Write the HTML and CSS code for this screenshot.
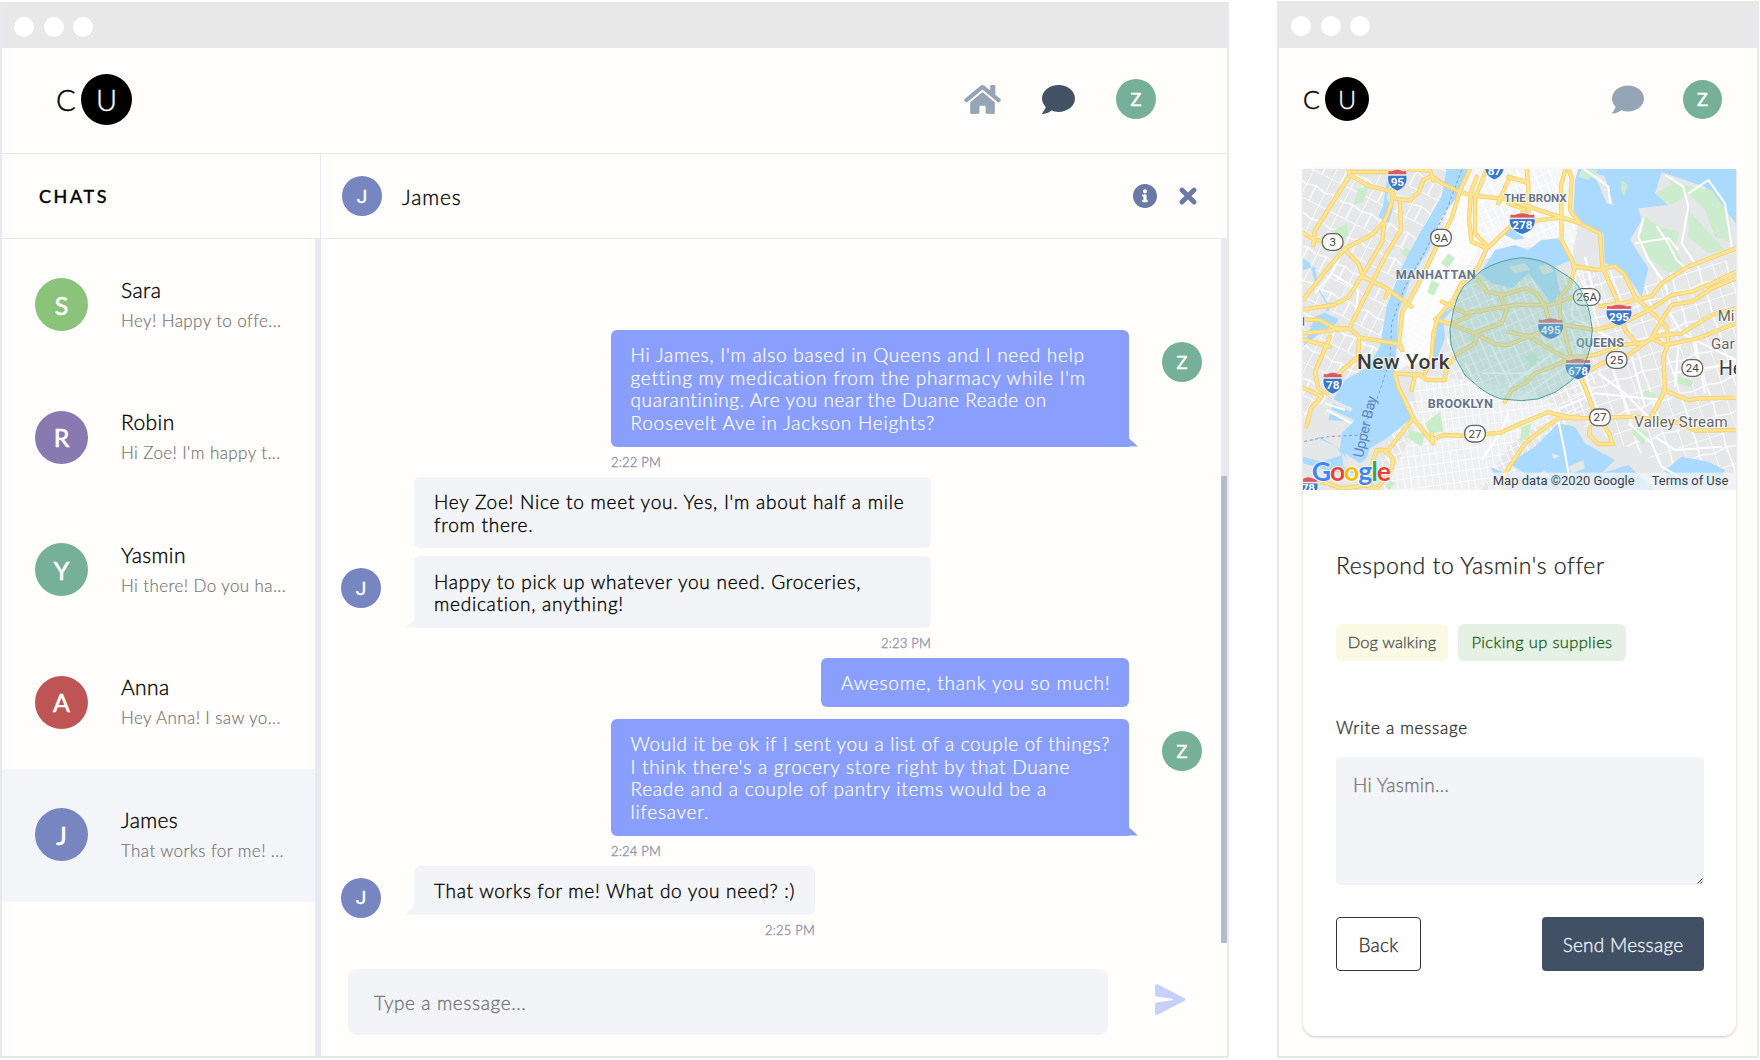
FILE: index.html
```html
<!DOCTYPE html>
<html lang="en">
<head>
<meta charset="utf-8">
<title>CU</title>
<link rel="stylesheet" href="styles.css">
</head>
<body>
<svg class="sprite" aria-hidden="true">
  <symbol id="i-home" viewBox="0 32 576 448"><path d="M280.37 148.26L96 300.11V464a16 16 0 0 0 16 16l112.06-.29a16 16 0 0 0 15.92-16V368a16 16 0 0 1 16-16h64a16 16 0 0 1 16 16v95.64a16 16 0 0 0 16 16.05L464 480a16 16 0 0 0 16-16V300L295.67 148.26a12.19 12.19 0 0 0-15.3 0zM571.6 251.47L488 182.56V44.05a12 12 0 0 0-12-12h-56a12 12 0 0 0-12 12v72.61L318.47 43a48 48 0 0 0-61 0L4.34 251.47a12 12 0 0 0-1.6 16.9l25.5 31A12 12 0 0 0 45.15 301l235.22-193.74a12.19 12.19 0 0 1 15.3 0L530.9 301a12 12 0 0 0 16.9-1.6l25.5-31a12 12 0 0 0-1.7-16.93z"/></symbol>
  <symbol id="i-comment" viewBox="0 32 512 448"><path d="M256 32C114.6 32 0 125.1 0 240c0 49.6 21.4 95 57 130.7C44.5 421.1 2.7 466 2.2 466.5c-2.2 2.3-2.8 5.7-1.5 8.7S4.8 480 8 480c66.3 0 116-31.8 140.6-51.4 32.7 12.3 69 19.4 107.4 19.4 141.4 0 256-93.1 256-208S397.4 32 256 32z"/></symbol>
  <symbol id="i-info" viewBox="8 8 496 496"><path d="M256 8C119.043 8 8 119.083 8 256c0 136.997 111.043 248 248 248s248-111.003 248-248C504 119.083 392.957 8 256 8zm0 110c23.196 0 42 18.804 42 42s-18.804 42-42 42-42-18.804-42-42 18.804-42 42-42zm56 254c0 6.627-5.373 12-12 12h-88c-6.627 0-12-5.373-12-12v-24c0-6.627 5.373-12 12-12h12v-64h-12c-6.627 0-12-5.373-12-12v-24c0-6.627 5.373-12 12-12h64c6.627 0 12 5.373 12 12v100h12c6.627 0 12 5.373 12 12v24z"/></symbol>
  <symbol id="i-close" viewBox="0 0 18 18"><path d="M3 3l12 12M15 3L3 15" fill="none" stroke="currentColor" stroke-width="4.8" stroke-linecap="round"/></symbol>
  <symbol id="i-send" viewBox="0 0 31 31"><path d="M3 .5L29.5 14.3a1.3 1.3 0 0 1 0 2.4L3 30.5C1.500 31.200 0 30.500 0 29V20.500a2 2 0 0 1 1.600-2L17 16.300a.8.8 0 0 0 0-1.600L1.600 12.500a2 2 0 0 1-1.600-2V2C0 .500 1.500-.200 3 .500z"/></symbol>
</svg>

<div class="stage">
  <section class="window window-wide">
    <div class="titlebar"><i></i><i></i><i></i></div>
    <header class="topbar">
      <div class="logo"><span>C</span><b>U</b></div>
      <nav>
        <svg class="home"><use href="#i-home"/></svg>
        <svg class="comment"><use href="#i-comment"/></svg>
        <span class="avatar green">Z</span>
      </nav>
    </header>
    <div class="chat-app">
      <aside>
        <h2>CHATS</h2>
        <div class="people">
          <div class="person"><span class="avatar lime">S</span><div><h3>Sara</h3><p>Hey! Happy to offe...</p></div></div>
          <div class="person"><span class="avatar purple">R</span><div><h3>Robin</h3><p>Hi Zoe! I'm happy t...</p></div></div>
          <div class="person"><span class="avatar green">Y</span><div><h3>Yasmin</h3><p>Hi there! Do you ha...</p></div></div>
          <div class="person"><span class="avatar red">A</span><div><h3>Anna</h3><p>Hey Anna! I saw yo...</p></div></div>
          <div class="person selected"><span class="avatar blue">J</span><div><h3>James</h3><p>That works for me! ...</p></div></div>
        </div>
      </aside>
      <main>
        <div class="chat-head">
          <span class="avatar blue">J</span><h3>James</h3>
          <svg class="info"><use href="#i-info"/></svg>
          <svg class="close"><use href="#i-close"/></svg>
        </div>
        <div class="messages">
          <div class="thread">
            <div class="row me"><div class="bubble wide tail">Hi James, I'm also based in Queens and I need help<br>getting my medication from the pharmacy while I'm<br><span class="snug">quarantining. Are you near the Duane Reade on</span><br>Roosevelt Ave in Jackson Heights?</div><span class="avatar green">Z</span></div>
            <time class="time-me">2:22 PM</time>
            <div class="row them first"><div class="bubble wide">Hey Zoe! Nice to meet you. Yes, I'm about half a mile<br>from there.</div></div>
            <div class="row them"><span class="avatar blue">J</span><div class="bubble wide tail">Happy to pick up whatever you need. Groceries,<br>medication, anything!</div></div>
            <time class="time-them">2:23 PM</time>
            <div class="row me first"><div class="bubble">Awesome, thank you so much!</div></div>
            <div class="row me"><div class="bubble wide tail"><span class="snug">Would it be ok if I sent you a list of a couple of things?</span><br>I think there's a grocery store right by that Duane<br>Reade and a couple of pantry items would be a<br>lifesaver.</div><span class="avatar green">Z</span></div>
            <time class="time-me">2:24 PM</time>
            <div class="row them"><span class="avatar blue">J</span><div class="bubble mid tail">That works for me! What do you need? :)</div></div>
            <time class="time-mid">2:25 PM</time>
          </div>
          <div class="track"><div class="thumb"></div></div>
        </div>
        <div class="composer">
          <div class="field">Type a message...</div>
          <svg class="send"><use href="#i-send"/></svg>
        </div>
      </main>
    </div>
  </section>

  <section class="window window-phone">
    <div class="titlebar"><i></i><i></i><i></i></div>
    <header class="topbar">
      <div class="logo"><span>C</span><b>U</b></div>
      <nav>
        <svg class="comment"><use href="#i-comment"/></svg>
        <span class="avatar green">Z</span>
      </nav>
    </header>
    <article class="card">
      <svg class="map" viewBox="24 27 1299 963" preserveAspectRatio="none">
        <defs>
          <pattern id="grid-a" width="26" height="17" patternUnits="userSpaceOnUse" patternTransform="rotate(28)"><path d="M0 0H26M0 0V17" class="street"/></pattern>
          <pattern id="grid-b" width="21" height="32" patternUnits="userSpaceOnUse" patternTransform="rotate(-8)"><path d="M0 0H21M0 0V32" class="street"/></pattern>
          <pattern id="grid-c" width="44" height="31" patternUnits="userSpaceOnUse" patternTransform="rotate(-24)"><path d="M0 0H44M0 0V31M22 0V31" class="street"/></pattern>
          <pattern id="grid-d" width="62" height="88" patternUnits="userSpaceOnUse" patternTransform="rotate(27)"><path d="M0 0H62M0 0V88M0 48L30 40L62 48M30 40V88" class="street"/></pattern>
          <pattern id="grid-e" width="84" height="98" patternUnits="userSpaceOnUse" patternTransform="rotate(-18)"><path d="M0 0H84M0 0V98M0 50L40 42L84 50M44 0L40 42L44 98" class="street"/></pattern>
          <g id="roads">
            <path d="M160 27L165 45L105 140L60 212L55 255M24 218L60 240L95 244M165 45L215 75L290 95L300 115L345 122L372 95L385 60L410 48L440 70L500 98L545 108L640 118L700 140L800 172"/>
            <path d="M165 36H300M330 27L405 32L415 62M296 80L290 130L268 185L230 225L150 265L90 335L24 420M315 125L318 210L270 290L205 420L165 500"/>
            <path d="M268 185L262 245L215 325L160 412L115 435L24 448M148 268L190 310L205 352L270 382L350 440M272 412L280 392M24 478L75 480L115 503L165 506L195 533L310 552L320 570M24 520L160 506M24 538L105 560M192 535L190 590L125 645M105 530L60 635L70 685L95 700M24 682L80 710L48 745L35 798"/>
            <path d="M525 27L495 92L470 175L420 270L392 330L345 420L322 455L312 545L322 570M545 50L528 95L522 180L530 245L575 265L550 320L500 370L475 420L430 470L415 520L410 590L390 640"/>
            <path d="M575 27L540 115L540 220L580 262L650 195L690 150L640 130M420 478L460 490L535 520L620 490L635 450L615 405L640 400L690 385L725 400L750 440L762 480M440 425L510 460L660 435L765 435L830 412M508 350L545 355L575 395L625 405M470 490L520 470M540 520L600 552L640 555L720 522L762 510M545 525L540 550L490 580L455 620L450 660L395 660L375 645L300 640M640 515L705 530L760 565L810 592L850 590M630 725L650 690L690 670L720 640L770 620L830 595L900 585L980 555L1050 548"/>
            <path d="M640 50L700 70V158M695 27L700 80M820 27L830 55L825 150L855 190L915 220L922 320L970 430L990 510L1020 545M812 27L798 75L800 240L840 320L825 375L795 410L795 465L825 580M640 60L610 130M650 55L700 65M700 185L800 172L855 190M835 318L905 330L960 318L990 345L1020 410L1115 500L1120 550L1105 590L1110 690L1080 750L1070 765"/>
            <path d="M915 438L980 430L1070 408L1100 370L1170 325L1230 300L1323 265M810 495L900 510L980 490L1060 452L1130 405L1190 395L1250 370L1323 335M870 640L920 610L1000 585L1070 535L1100 480L1130 435L1190 425L1250 385L1323 355M1070 530L1160 520L1250 465L1323 445M1070 535L1110 555L1210 535L1323 490M1105 690L1180 720L1215 715L1323 713M850 590L830 600L870 680L898 760"/>
            <path d="M300 640L310 680L355 775L280 870L245 870L230 915L220 990M355 775L415 850L410 820M350 690L360 645M415 838L445 825L520 828L615 818L690 785L760 757L840 775L1020 770M850 770L790 775L740 810L690 850L650 910L630 940L625 990M1020 770L1160 790L1200 812L1323 810M885 800L882 825L910 852L955 852M925 795L945 825L950 850M265 870L295 895L290 925L260 970L240 990M24 980L80 965L140 985L230 975"/>
          </g>
          <path id="shield2" d="M-28-16H28C33 8 18 25 0 31C-18 25-33 8-28-16z"/>
          <path id="shield2-top" d="M-27-31q9 4 16-1 11-5 22 0 7 5 16 1l2 13h-58z"/>
          <path id="shield3" d="M-38-15H38C43 8 24 26 0 32C-24 26-43 8-38-15z"/>
          <path id="shield3-top" d="M-36-29q12 4 20-1 16-5 32 0 8 5 20 1l2 12h-76z"/>
        </defs>
        <rect x="24" y="27" width="1299" height="963" fill="#e6e7e8"/>
        <path d="M24 27H480L440 170L300 470L265 620L110 700L24 790Z" fill="url(#grid-d)"/>
        <path d="M470 27H880L830 300L700 260L560 300L470 420L420 560L300 640L330 440L440 240Z" fill="#f4f5f6"/>
        <path d="M500 90L560 250L440 450L410 590L340 620L325 450L400 320Z" fill="#fcfcfc"/>
        <path d="M500 50L560 250L440 450L410 590L300 620L320 450L400 320Z" fill="url(#grid-a)"/>
        <path d="M520 27H840V250L660 230L560 300Z" fill="url(#grid-c)"/>
        <path d="M480 380L700 340L900 330L900 700L620 990H260V880L360 700L440 640Z" fill="url(#grid-c)"/>
        <path d="M830 330L1060 330L1323 300V940H1160L830 780Z" fill="url(#grid-e)"/>
        <path d="M350 640L650 680L800 740L640 860L560 990H270L370 780Z" fill="#eff0f1"/>
        <path d="M350 640L650 680L800 740L640 860L560 990H270L370 780Z" fill="url(#grid-b)"/>
        <g fill="#c9ecc9">
          <path d="M190 85l30-5-15 45-30 10zM110 215l45-25 5 35-35 35zM330 262l18 10-10 20-20-10zM460 280l20 15-22 30-20-15zM410 360l25 12-20 35-18-10zM340 810l50 12-10 38-40-25zM435 755l10 60-40 5-15-30zM285 960l15 10-15 20-12-10zM690 590l25-15 15 25-20 20zM1050 690l35 12-8 12-32-10zM1150 650l45 12-8 20-40-12zM520 530l20-8 8 30-15 8zM1010 800l50 20-15 35-30-30zM680 800l30-10-10 45-25 10z"/>
        </g>
        <g fill="#aadaff">
          <path d="M850 27H1323V190L1230 80L1100 37L1080 100L1120 135L1030 145L1040 180L1005 240L1060 325L1040 410L985 330L930 310L925 220L860 190L835 150L840 60Z"/>
          <path d="M480 27H530L495 100L440 170L400 270L350 350L310 455L305 555L295 650L335 730L350 775L275 835L225 865L205 920H170L135 870L140 820L175 785L100 780L120 710L150 660L220 620L255 560L275 440L320 320L380 210L440 110L455 27Z"/>
          <path d="M575 310L600 270L660 255L700 270L740 240L790 235L830 300L780 320L795 400L770 435L740 390L700 340L650 385L590 370L555 340ZM480 440L445 480L450 535L425 600L408 590L425 510L420 470Z"/>
          <path d="M690 235L660 240L630 225L640 200ZM24 330L60 320L70 390L105 450L60 470L24 560L60 530L125 490L130 475L90 460L100 430L60 370L45 310L24 295ZM24 850L75 830L140 870L145 920L190 940L110 935L24 910Z"/>
          <path d="M840 800L870 850L960 900L920 940H690L640 910L720 860L790 790ZM625 990L585 920L630 940L700 940H920L1000 915L1080 990ZM1110 930L1160 890L1240 905L1290 930L1270 980L1120 985Z"/>
          <path d="M275 65l12-10-12 60 20 30-15 45-30-20 15-35z"/>
        </g>
        <g fill="#e6e7e8">
          <path d="M640 320L690 310L705 330L660 340ZM730 320L760 310L775 335L745 345ZM870 27L930 50L955 135L935 130L905 60L860 35ZM24 850L70 835L125 860L140 885L80 905L24 890ZM150 880L195 910L240 880L210 960L160 920ZM770 880l25 8-20 10zM700 950l50-18 20 20zM820 920l45-20 5 25-40 15z"/>
        </g>
        <path d="M75 740l100 45M95 715l75 35" fill="none" stroke="#e6e7e8" stroke-width="12"/>
        <g fill="#cdeccd">
          <path d="M1105 37L1160 75L1250 90L1300 160L1310 250L1260 230L1230 150L1180 100L1130 135L1080 100L1130 75ZM1050 170L1090 200L1150 215L1140 270L1170 320L1120 340L1070 300L1030 240L1040 215ZM1180 150L1215 190L1290 270L1240 280L1180 230ZM860 27L910 30L880 60L850 50ZM980 60l18 15-10 35-10-20z"/>
        </g>
        <g class="lanes">
          <path d="M1110 45L1165 80L1180 140L1160 250L1200 310M1180 100L1240 60L1290 130L1310 260M1045 175L1030 230L1060 300L1110 370L1130 450M1085 200L1120 250L1145 300L1180 330M1020 250L1120 235L1150 270M865 27L900 50L940 80L945 130M790 780L810 880L830 990M1000 790L1070 850L1100 920L1170 960M1080 830L1140 870L1280 860M910 640L990 700L1080 790M950 620L1010 780M1010 590L1050 740M1150 560L1140 680M1200 540L1230 700M1130 640L1323 610M1120 450L1160 520L1323 600M60 400L110 340L190 390L180 480M110 340L140 280M95 750L170 790M90 730L150 750M560 900L620 810L640 760M740 770L900 700L1100 720M840 330L830 470L960 540M870 290L900 410L930 440M640 680L800 560M670 720L830 610M560 640L760 640M510 610L570 720M590 560L650 680"/>
        </g>
        <path d="M500 30L455 150L395 265L330 380L290 490L285 600L245 720L195 825L100 830L24 845" fill="none" stroke="#87a0bd" stroke-width="3" stroke-dasharray="9 8"/>
        <use href="#roads" class="casing"/>
        <use href="#roads" class="highway"/>
        <g class="names">
          <text x="721" y="127" textLength="188" class="area bronx">THE BRONX</text>
          <text x="422" y="357" textLength="240" class="area">MANHATTAN</text>
          <text x="496" y="745" textLength="195" class="area">BROOKLYN</text>
          <text x="915" y="560" textLength="144" class="area">QUEENS</text>
          <text x="325" y="626" textLength="278" class="city">New York</text>
          <text x="1158" y="800" textLength="280" class="town">Valley Stream</text>
          <text x="1268" y="484" class="town left">Mi</text>
          <text x="1248" y="568" class="town left">Gar</text>
          <text x="1272" y="646" class="city left thin">He</text>
          <text x="0" y="0" transform="translate(203 895) rotate(-77)" class="bay" textLength="188">Upper Bay</text>
        </g>
        <g class="shield">
          <g transform="translate(307 62)"><use href="#shield2-top" class="r"/><use href="#shield2" class="b"/><text y="17">95</text></g>
          <g transform="translate(113 671)"><use href="#shield2-top" class="r"/><use href="#shield2" class="b"/><text y="17">78</text></g>
          <g transform="translate(598 28)"><use href="#shield2" class="b"/><text y="18">87</text></g>
          <g transform="translate(40 985)"><use href="#shield2-top" class="r"/><use href="#shield2" class="b"/><text y="12">78</text></g>
          <g transform="translate(24 484)"><path class="b" d="M-5-14H5V14H-5z"/></g>
          <g transform="translate(682 191)"><use href="#shield3-top" class="r"/><use href="#shield3" class="b"/><text y="17">278</text></g>
          <g transform="translate(972 465)"><use href="#shield3-top" class="r"/><use href="#shield3" class="b"/><text y="17">295</text></g>
          <g transform="translate(767 506)"><use href="#shield3-top" class="r"/><use href="#shield3" class="b"/><text y="17">495</text></g>
          <g transform="translate(849 627)"><use href="#shield3-top" class="r"/><use href="#shield3" class="b"/><text y="17">678</text></g>
        </g>
        <g class="route">
          <rect x="82" y="221" width="62" height="50" rx="23"/><text x="113" y="259">3</text>
          <rect x="407" y="208" width="62" height="50" rx="23"/><text x="438" y="246">9A</text>
          <rect x="835" y="386" width="80" height="50" rx="25"/><text x="875" y="424">25A</text>
          <rect x="934" y="575" width="62" height="50" rx="23"/><text x="965" y="612">25</text>
          <rect x="1161" y="599" width="62" height="50" rx="23"/><text x="1192" y="637">24</text>
          <rect x="884" y="747" width="62" height="50" rx="23"/><text x="915" y="784">27</text>
          <rect x="509" y="796" width="62" height="50" rx="23"/><text x="540" y="833">27</text>
        </g>
        <path d="M679 293Q735 297 765 315L820 350Q845 366 860 395Q880 430 886 470L892 510L886 560Q880 590 865 620Q850 645 825 665L780 697L728 717L680 722L620 717Q585 708 550 680L510 645Q480 600 468 555L465 508L475 450Q485 410 505 380L560 332Q610 300 679 293Z" fill="#8cc9c2" fill-opacity=".42" stroke="#4fa09a" stroke-width="3"/>
        <rect x="580" y="938" width="743" height="55" fill="#f5f7fa" fill-opacity=".72"/>
        <text x="593" y="976" class="legal" textLength="426">Map data ©2020 Google</text>
        <text x="1070" y="976" class="legal" textLength="230">Terms of Use</text>
        <text x="50" y="963" class="google" textLength="238"><tspan fill="#4285f4">G</tspan><tspan fill="#ea4335">o</tspan><tspan fill="#fbbc05">o</tspan><tspan fill="#4285f4">g</tspan><tspan fill="#34a853">l</tspan><tspan fill="#ea4335">e</tspan></text>
      </svg>
      <div class="card-body">
        <h1>Respond to Yasmin's offer</h1>
        <div class="chips"><span class="chip yellow">Dog walking</span><span class="chip mint">Picking up supplies</span></div>
        <label>Write a message</label>
        <div class="textarea">Hi Yasmin...<svg class="grip" viewBox="0 0 6 6"><path d="M.5 5.500l5-5M3.500 5.500l2-2" fill="none" stroke="#333"/></svg></div>
        <div class="actions"><button class="back">Back</button><button class="submit">Send Message</button></div>
      </div>
    </article>
  </section>
</div>
</body>
</html>
```
FILE: styles.css
```css
* { box-sizing: border-box; margin: 0; padding: 0; }
body { width: 1760px; height: 1060px; overflow: hidden; background: #fff; color: #000; font-family: Lato, "Open Sans", sans-serif; font-weight: 300; -webkit-text-stroke: .35px; }
h1, h2, h3 { font-weight: 300; }
svg { display: block; fill: currentColor; flex: none; -webkit-text-stroke: 0; }
.sprite { display: none; }
.stage { display: flex; justify-content: space-between; padding: 2px 1px 2px 0; height: 1060px; }

.window { background: #fffefd; border: 2px solid #e8e9ec; border-top: 0; display: flex; flex-direction: column; }
.window-wide { width: 1229px; height: 1056px; }
.window-phone { width: 482px; height: 1057px; margin-top: -1px; }
.titlebar { height: 46px; flex: none; background: #e8e8e8; display: flex; gap: 9.500px; padding: 15px 0 0 12px; }
.window-phone .titlebar { height: 47px; }
.titlebar i { width: 20px; height: 20px; border-radius: 50%; background: #fff; }

.avatar { width: 40px; height: 40px; border-radius: 50%; flex: none; display: flex; align-items: center; justify-content: center; color: #fff; font: 400 19px Roboto, sans-serif; }
.green { background: #77b098; }
.blue { background: #7785c0; }
.lime { background: #8bc37a; }
.purple { background: #8879b1; }
.red { background: #be5454; }

.topbar { display: flex; justify-content: space-between; align-items: center; flex: none; }
.topbar nav { display: flex; align-items: center; }
.logo { display: flex; align-items: center; }
.logo span { font: 300 29px Lato, sans-serif; -webkit-text-stroke: .5px #000; }
.logo b { border-radius: 50%; background: #000; color: #fff; display: flex; align-items: center; justify-content: center; font: 300 29px Lato, sans-serif; }
.window-wide .topbar { height: 106px; padding: 0 71px 3px 54px; border-bottom: 1px solid #e8e9ef; }
.window-wide .logo span { width: 25px; }
.window-wide .logo b { width: 51px; height: 51px; }
.home { width: 37px; height: 29px; color: #95a5b6; margin-right: 41px; }
.comment { width: 33px; height: 29px; color: #435364; margin-right: 41px; }

.chat-app { flex: 1; display: grid; grid-template-columns: 319px 1fr; min-height: 0; }
aside { display: flex; flex-direction: column; }
aside h2 { height: 85px; flex: none; padding: 1px 0 0 37px; border-right: 1px solid #e8e9ef; border-bottom: 1px solid #e8e9ef; font: 400 18px/83px Lato, sans-serif; letter-spacing: 2.600px; -webkit-text-stroke: .45px; }
.people { flex: 1; border-right: 6px solid #e8eaf1; }
.person { height: 132.500px; display: flex; align-items: center; padding: 0 0 1px 33px; gap: 33px; white-space: nowrap; }
.person .avatar { width: 53px; height: 53px; font: 400 25px Lato, sans-serif; -webkit-text-stroke: .6px; }
.person h3 { font-size: 21px; line-height: 28px; letter-spacing: .4px; padding-top: 1px; }
.person p { font-size: 17px; line-height: 28px; color: #777; letter-spacing: .4px; margin-top: 3px; -webkit-text-stroke: .2px; }
.selected { background: #f3f5f8; }

main { display: flex; flex-direction: column; min-width: 0; }
.chat-head { height: 85px; flex: none; border-bottom: 1px solid #e8e9ef; display: flex; align-items: center; padding: 0 30px 0 21px; }
.chat-head h3 { font-size: 21px; letter-spacing: .9px; flex: 1; margin-left: 20px; }
.info, .close { color: #6b79a7; }
.info { width: 24px; height: 24px; margin-right: 22px; }
.close { width: 18px; height: 18px; }
.messages { height: 704px; display: flex; justify-content: space-between; }
.thread { width: 881px; padding: 91px 0 0 20px; }
.row { display: flex; align-items: flex-start; }
.row.me { justify-content: flex-end; }
.row .avatar { margin-top: 12px; }
.me .avatar { margin-left: 33px; }
.them .avatar { margin-right: 33px; }
.me.first { padding-right: 73px; margin-bottom: 12px; }
.them.first { padding-left: 73px; margin-bottom: 8px; }
.bubble { position: relative; padding: 14.250px 20px 12.250px; border-radius: 6px; font-size: 19px; line-height: 22.500px; white-space: nowrap; letter-spacing: .75px; }
.snug { letter-spacing: .62px; }
.me .bubble { background: #8a9ffd; color: #fff; width: 308px; -webkit-text-stroke: .2px; }
.them .bubble { background: #f3f4f7; }
.me .wide { width: 518.500px; }
.them .wide { width: 517px; }
.them .mid { width: 401px; letter-spacing: .7px; }
.me .tail { border-bottom-right-radius: 0; }
.them .tail { border-bottom-left-radius: 0; }
.tail::after { content: ""; position: absolute; bottom: 0; width: 10px; height: 9px; }
.me .tail::after { right: -9px; background: #8a9ffd; clip-path: polygon(0 0, 100% 100%, 0 100%); }
.them .tail::after { left: -9px; background: #f3f4f7; clip-path: polygon(100% 0, 100% 100%, 0 100%); }
time { display: block; height: 30.250px; font-size: 13px; line-height: 30px; color: #8b91a5; letter-spacing: .2px; }
.time-me { padding-left: 270px; }
.time-them { width: 590px; text-align: right; }
.time-mid { width: 474px; text-align: right; margin-top: -3px; }
.track { width: 6px; background: #e8eaef; }
.thumb { margin-top: 237px; height: 467px; background: #b3bbcb; }
.composer { flex: 1; display: flex; padding: 26px 0 0 27px; }
.field { width: 760px; height: 66px; border-radius: 9px; background: #f3f4f7; color: #777; font-size: 19px; line-height: 68px; padding-left: 26px; letter-spacing: .6px; }
.send { width: 31px; height: 31px; margin: 15px 0 0 47px; color: #c5d0fe; }

.window-phone .topbar { height: 121px; padding: 0 35px 19px 24px; }
.window-phone .logo span { width: 22px; font-size: 25px; }
.window-phone .logo b { width: 44px; height: 44px; font-size: 25px; }
.window-phone .comment { width: 32px; color: #95a5b6; margin-right: 39px; }
.window-phone .topbar .avatar { width: 39px; height: 39px; }
.card { width: 433px; height: 867px; margin-left: 24px; background: #fff; border-radius: 0 0 13px 13px; box-shadow: 0 1px 3px rgba(0,0,0,.22); }
.map { width: 433px; height: 321px; }
.card-body { padding: 59px 32px 0 33px; color: #333; }
.card h1 { font-size: 23px; line-height: 32px; letter-spacing: .55px; color: #222; white-space: nowrap; -webkit-text-stroke: .25px; }
.chips { display: flex; gap: 10px; margin-top: 43px; }
.chip { height: 37px; line-height: 37px; border-radius: 6px; font-size: 16.500px; text-align: center; white-space: nowrap; letter-spacing: .1px; }
.yellow { width: 112px; background: #f9f9e4; color: #555; }
.mint { width: 168px; background: #e5f1e5; color: #1c641c; letter-spacing: .35px; }
label { display: block; font-size: 17px; line-height: 24px; margin-top: 55px; letter-spacing: .7px; }
.textarea { position: relative; height: 128px; margin-top: 17px; border-radius: 4px; background: #f3f4f7; color: #777; font-size: 19px; line-height: 24px; padding: 16px 17px; letter-spacing: .3px; }
.grip { position: absolute; right: 1px; bottom: 1px; width: 6px; height: 6px; }
.actions { display: flex; justify-content: space-between; margin-top: 32px; }
button { height: 54px; border-radius: 4px; font: 300 19px Lato, sans-serif; letter-spacing: .25px; -webkit-text-stroke: .35px; white-space: nowrap; }
.back { width: 85px; border: 1.500px solid #333; background: #fff; color: #333; }
.submit { width: 162px; border: 0; background: #415065; color: #eef1f5; }

.map { font-family: Roboto, sans-serif; font-weight: 400; }
.map .street { fill: none; stroke: #fff; stroke-width: 4; }
.lanes { fill: none; stroke: #fff; stroke-width: 6; stroke-linejoin: round; }
.casing { fill: none; stroke: #f6cf65; stroke-width: 13; stroke-linejoin: round; stroke-linecap: round; }
.highway { fill: none; stroke: #ffe493; stroke-width: 8; stroke-linejoin: round; stroke-linecap: round; }
.names text { text-anchor: middle; paint-order: stroke; stroke: #fff; stroke-width: 6; stroke-opacity: .8; }
.names .left { text-anchor: start; }
.names .area { font-size: 38px; font-weight: 700; fill: #66758a; }
.names .bronx { font-size: 35px; }
.names .city { font-size: 63px; font-weight: 500; fill: #3c3c3c; }
.names .thin { font-weight: 400; font-size: 58px; }
.names .town { font-size: 45px; fill: #666; }
.names .bay { font-size: 43px; fill: #5f86bd; text-anchor: start; stroke: none; }
.shield text { fill: #fff; font-size: 35px; font-weight: 700; text-anchor: middle; }
.shield .r { fill: #dc5a5e; stroke: #fff; stroke-width: 2; }
.shield .b { fill: #3a78cb; stroke: #fff; stroke-width: 2; }
.route rect { fill: #fff; stroke: #666; stroke-width: 4; }
.route text { font-size: 35px; fill: #444; text-anchor: middle; }
.legal { font-size: 39px; fill: #3f4144; }
.google { font-family: Lato, sans-serif; font-size: 80px; font-weight: 700; paint-order: stroke; stroke: #fff; stroke-width: 5; }
```
